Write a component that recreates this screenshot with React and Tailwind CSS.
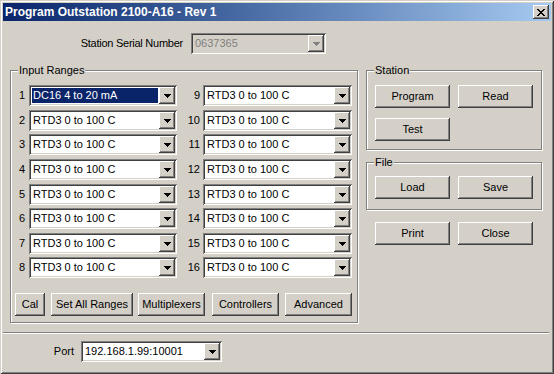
const raised =
  "bg-[#d4d0c8] shadow-[inset_-1px_-1px_#404040,inset_1px_1px_#fff,inset_-2px_-2px_#808080,inset_2px_2px_#d4d0c8]";
const sunken =
  "shadow-[inset_1px_1px_#808080,inset_-1px_-1px_#fff,inset_2px_2px_#404040,inset_-2px_-2px_#d4d0c8]";
const etched = "border border-[#808080] shadow-[inset_1px_1px_#fff,1px_1px_#fff]";

const rowGaps = ["mt-[8px]", "mt-[4px]", "mt-[3px]", "mt-[4px]", "mt-[4px]", "mt-[3px]", "mt-[4px]", "mt-[3px]"];

function Arrow({ color = "#000" }) {
  return (
    <svg width="7" height="4" viewBox="0 0 7 4" shapeRendering="crispEdges">
      <path d="M0 0h7v1H0z M1 1h5v1H1z M2 2h3v1H2z M3 3h1v1H3z" fill={color} />
    </svg>
  );
}

function Combo({ value, selected = false, disabled = false, className = "" }) {
  return (
    <div className={`flex h-[21px] p-[2px] ${disabled ? "bg-[#d4d0c8]" : "bg-white"} ${sunken} ${className}`}>
      <div className="flex min-w-0 flex-1 items-center">
        {selected ? (
          <span className="m-[1px] flex h-[15px] flex-1 items-center bg-[#0a246a] pl-[1px] text-white">{value}</span>
        ) : (
          <span className={`pl-[2px] ${disabled ? "text-[#808080]" : ""}`}>{value}</span>
        )}
      </div>
      <div className={`flex w-[16px] items-center justify-center ${raised}`}>
        <Arrow color={disabled ? "#808080" : "#000"} />
      </div>
    </div>
  );
}

function Btn({ label, className = "" }) {
  return (
    <div className={`flex h-[23px] items-center justify-center ${raised} ${className}`}>{label}</div>
  );
}

function GroupLabel({ text }) {
  return (
    <div className="-mt-[7px] ml-[7px] w-fit bg-[#d4d0c8] px-[1px] leading-[13px]">{text}</div>
  );
}

export default function App() {
  const left = ["DC16 4 to 20 mA", ...Array(7).fill("RTD3 0 to 100 C")];
  const right = Array(8).fill("RTD3 0 to 100 C");

  return (
    <div className="h-[374px] w-[554px] overflow-hidden bg-[#d4d0c8] p-[3px] font-['Liberation_Sans',Arial,sans-serif] text-[11px] text-black shadow-[inset_1px_1px_#d4d0c8,inset_-1px_-1px_#404040,inset_2px_2px_#fff,inset_-2px_-2px_#808080]">
      {/* title bar */}
      <div className="flex h-[18px] items-center bg-linear-to-r from-[#0a246a] to-[#a6caf0] pl-[2px] pr-[2px]">
        <span className="flex-1 text-[12px] font-bold text-white">Program Outstation 2100-A16 - Rev 1</span>
        <div className={`flex h-[14px] w-[16px] items-center justify-center ${raised}`}>
          <svg width="8" height="7" viewBox="0 0 8 7" shapeRendering="crispEdges">
            <path
              d="M0 0h2v1H0z M6 0h2v1H6z M1 1h2v1H1z M5 1h2v1H5z M2 2h4v1H2z M3 3h2v1H3z M2 4h4v1H2z M1 5h2v1H1z M5 5h2v1H5z M0 6h2v1H0z M6 6h2v1H6z"
              fill="#000"
            />
          </svg>
        </div>
      </div>

      {/* serial */}
      <div className="mt-[12px] flex items-center">
        <div className="w-[180px] text-right tracking-[-0.25px]">Station Serial Number</div>
        <Combo value="0637365" disabled className="ml-[8px] w-[135px]" />
      </div>

      <div className="mt-[16px] flex items-start">
        {/* input ranges */}
        <div className={`ml-[7px] h-[253px] w-[348px] ${etched}`}>
          <GroupLabel text="Input Ranges" />
          {left.map((v, i) => (
            <div key={i} className={`flex items-center ${rowGaps[i]}`}>
              <div className="w-[14px] text-right">{i + 1}</div>
              <Combo value={v} selected={i === 0} className="ml-[4px] w-[148px]" />
              <div className="w-[23px] text-right">{i + 9}</div>
              <Combo value={right[i]} className="ml-[3px] w-[149px]" />
            </div>
          ))}
          <div className="mt-[15px] flex">
            <Btn label="Cal" className="ml-[4px] w-[30px]" />
            <Btn label="Set All Ranges" className="ml-[6px] w-[82px]" />
            <Btn label="Multiplexers" className="ml-[5px] w-[67px]" />
            <Btn label="Controllers" className="ml-[7px] w-[67px]" />
            <Btn label="Advanced" className="ml-[6px] w-[67px]" />
          </div>
        </div>

        {/* right column */}
        <div className="ml-[8px] flex flex-col">
          <div className={`h-[80px] w-[176px] ${etched}`}>
            <GroupLabel text="Station" />
            <div className="mt-[8px] flex">
              <Btn label="Program" className="ml-[8px] w-[75px]" />
              <Btn label="Read" className="ml-[8px] w-[75px]" />
            </div>
            <div className="mt-[10px] flex">
              <Btn label="Test" className="ml-[8px] w-[75px]" />
            </div>
          </div>
          <div className={`mt-[12px] h-[48px] w-[176px] ${etched}`}>
            <GroupLabel text="File" />
            <div className="mt-[7px] flex">
              <Btn label="Load" className="ml-[8px] w-[75px]" />
              <Btn label="Save" className="ml-[8px] w-[75px]" />
            </div>
          </div>
          <div className="mt-[12px] flex">
            <Btn label="Print" className="ml-[9px] w-[75px]" />
            <Btn label="Close" className="ml-[8px] w-[75px]" />
          </div>
        </div>
      </div>

      {/* separator */}
      <div className="mr-[2px] mt-[9px] h-[2px] border-t border-b border-t-[#808080] border-b-white" />

      {/* port */}
      <div className="mt-[7px] flex items-center">
        <div className="w-[71px] text-right">Port</div>
        <Combo value="192.168.1.99:10001" className="ml-[7px] w-[141px]" />
      </div>
    </div>
  );
}
